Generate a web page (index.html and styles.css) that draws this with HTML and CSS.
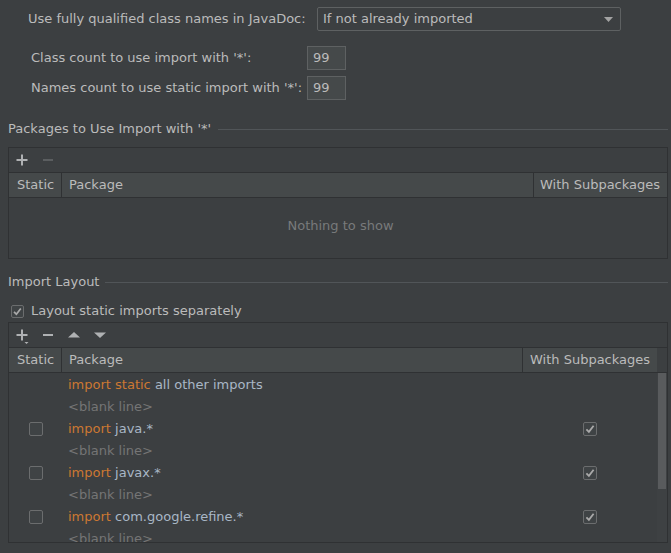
FILE: index.html
```html
<!DOCTYPE html>
<html>
<head>
<meta charset="utf-8">
<link rel="stylesheet" href="styles.css">
</head>
<body>
<div class="page">
  <div class="qrow">
    <span class="qlabel">Use fully qualified class names in JavaDoc:</span>
    <div class="combo">
      <span>If not already imported</span>
      <svg class="combo-arrow" width="9" height="5" viewBox="0 0 9 5"><path d="M0 0H9L4.5 5Z" fill="#a3a3a3"/></svg>
    </div>
  </div>

  <div class="counts">
    <span class="clabel">Class count to use import with '*':</span>
    <div class="num">99</div>
    <span class="clabel">Names count to use static import with '*':</span>
    <div class="num">99</div>
  </div>

  <div class="title title-pkg"><span>Packages to Use Import with '*'</span><i class="rule"></i></div>

  <div class="table table-pkg">
    <div class="toolbar">
      <svg class="icon" width="16" height="16" viewBox="0 0 16 16"><path d="M8 2.5V13.5M2.5 8H13.5" stroke="#afb1b3" stroke-width="2"/></svg>
      <svg class="icon" width="16" height="16" viewBox="0 0 16 16"><path d="M3 8H13" stroke="#5b5e60" stroke-width="2"/></svg>
    </div>
    <div class="thead thead-pkg">
      <div class="th th-static">Static</div>
      <div class="th th-pkg">Package</div>
      <div class="th th-sub">With Subpackages</div>
    </div>
    <div class="empty">Nothing to show</div>
  </div>

  <div class="title title-layout"><span>Import Layout</span><i class="rule"></i></div>

  <div class="checkrow">
    <span class="cb cb-small"><svg width="13" height="13" viewBox="0 0 13 13"><path d="M3 6.8L5.4 9.2L9.8 3.4" stroke="#a9a9a9" stroke-width="1.7" fill="none"/></svg></span>
    <span>Layout static imports separately</span>
  </div>

  <div class="table table-layout">
    <div class="toolbar">
      <svg class="icon" width="16" height="16" viewBox="0 0 16 16" overflow="visible"><path d="M8 2.5V13.5M2.5 8H13.5" stroke="#afb1b3" stroke-width="2"/><path d="M10.5 15H14.5L12.5 17Z" fill="#afb1b3"/></svg>
      <svg class="icon" width="16" height="16" viewBox="0 0 16 16"><path d="M3 8H13" stroke="#afb1b3" stroke-width="2"/></svg>
      <svg class="icon" width="16" height="16" viewBox="0 0 16 16"><path d="M2 10.5H14L8 5Z" fill="#afb1b3"/></svg>
      <svg class="icon" width="16" height="16" viewBox="0 0 16 16"><path d="M2 5.5H14L8 11Z" fill="#afb1b3"/></svg>
    </div>
    <div class="thead thead-layout">
      <div class="th th-static">Static</div>
      <div class="th th-pkg">Package</div>
      <div class="th th-sub">With Subpackages</div>
      <div class="th-gap"></div>
    </div>
    <div class="tbody">
      <div class="rows">
        <div class="row"><div class="cell-static"></div><div class="cell-pkg"><span class="kw">import static</span> <span class="code">all other imports</span></div><div class="cell-sub"></div></div>
        <div class="row"><div class="cell-static"></div><div class="cell-pkg blank">&lt;blank line&gt;</div><div class="cell-sub"></div></div>
        <div class="row"><div class="cell-static"><span class="cb"></span></div><div class="cell-pkg"><span class="kw">import</span> <span class="code">java.*</span></div><div class="cell-sub"><span class="cb"><svg width="14" height="14" viewBox="0 0 14 14"><path d="M3.4 7.3L5.9 9.8L10.6 3.7" stroke="#a9a9a9" stroke-width="1.8" fill="none"/></svg></span></div></div>
        <div class="row"><div class="cell-static"></div><div class="cell-pkg blank">&lt;blank line&gt;</div><div class="cell-sub"></div></div>
        <div class="row"><div class="cell-static"><span class="cb"></span></div><div class="cell-pkg"><span class="kw">import</span> <span class="code">javax.*</span></div><div class="cell-sub"><span class="cb"><svg width="14" height="14" viewBox="0 0 14 14"><path d="M3.4 7.3L5.9 9.8L10.6 3.7" stroke="#a9a9a9" stroke-width="1.8" fill="none"/></svg></span></div></div>
        <div class="row"><div class="cell-static"></div><div class="cell-pkg blank">&lt;blank line&gt;</div><div class="cell-sub"></div></div>
        <div class="row"><div class="cell-static"><span class="cb"></span></div><div class="cell-pkg"><span class="kw">import</span> <span class="code">com.google.refine.*</span></div><div class="cell-sub"><span class="cb"><svg width="14" height="14" viewBox="0 0 14 14"><path d="M3.4 7.3L5.9 9.8L10.6 3.7" stroke="#a9a9a9" stroke-width="1.8" fill="none"/></svg></span></div></div>
        <div class="row"><div class="cell-static"></div><div class="cell-pkg blank">&lt;blank line&gt;</div><div class="cell-sub"></div></div>
      </div>
      <div class="scrollbar"><div class="thumb"></div></div>
    </div>
  </div>
</div>
</body>
</html>
```

FILE: styles.css
```css
html, body {
  margin: 0;
  padding: 0;
}
body {
  width: 671px;
  height: 553px;
  overflow: hidden;
  background: #3c3f41;
  color: #bbbbbb;
  font-family: "DejaVu Sans", sans-serif;
  font-size: 13px;
  line-height: 16px;
}
.page {
  padding: 7px 3px 0 8px;
  display: flex;
  flex-direction: column;
}

/* first row */
.qrow {
  display: flex;
  align-items: center;
  height: 24px;
  padding-left: 20px;
}
.qlabel {
  width: 289px;
  flex: none;
  white-space: nowrap;
}
.combo {
  box-sizing: border-box;
  width: 304px;
  height: 24px;
  border: 1px solid #5e6162;
  border-radius: 2px;
  display: flex;
  align-items: center;
  justify-content: space-between;
  padding: 0 7px 0 5px;
}
.combo-arrow {
  display: block;
  margin-top: 1px;
}

/* counts */
.counts {
  margin-top: 15px;
  padding-left: 23px;
  display: grid;
  grid-template-columns: 276px 39px;
  row-gap: 6px;
  align-items: center;
}
.clabel {
  white-space: nowrap;
}
.num {
  box-sizing: border-box;
  height: 24px;
  width: 39px;
  background: #45494a;
  border: 1px solid #5e6162;
  padding: 3px 0 0 5px;
}

/* section titles */
.title {
  display: flex;
  align-items: center;
  height: 16px;
  white-space: nowrap;
}
.title .rule {
  flex: 1;
  height: 1px;
  background: #515558;
  margin-top: 1px;
}
.title-pkg {
  margin-top: 21px;
}
.title-pkg .rule {
  margin-left: 7px;
}
.title-layout {
  margin-top: 15px;
}
.title-layout .rule {
  margin-left: 6px;
}

/* tables */
.table {
  border: 1px solid #2f3133;
  display: flex;
  flex-direction: column;
}
.table-pkg {
  margin-top: 10px;
  height: 112px;
  box-sizing: border-box;
}
.table-layout {
  margin-top: 3px;
  height: 221px;
  box-sizing: border-box;
}
.toolbar {
  height: 24px;
  display: flex;
  align-items: center;
  gap: 10px;
  padding-left: 5px;
  border-bottom: 1px solid #2f3133;
  flex: none;
}
.icon {
  display: block;
}
.thead {
  display: grid;
  height: 24px;
  border-bottom: 1px solid #2f3133;
  flex: none;
}
.thead-pkg {
  grid-template-columns: 52px 472px 134px;
}
.thead-layout {
  grid-template-columns: 52px 461px 135px 10px;
}
.th {
  background: #45494a;
  display: flex;
  align-items: center;
  white-space: nowrap;
  overflow: hidden;
}
.th-static {
  padding-left: 8px;
}
.th-pkg {
  border-left: 1px solid #2f3133;
  padding-left: 7px;
}
.th-sub {
  border-left: 1px solid #2f3133;
  padding-left: 6px;
}
.thead-layout .th-sub {
  padding-left: 7px;
}
.th-gap {
  background: #3c3f41;
}
.empty {
  flex: 1;
  display: flex;
  align-items: center;
  justify-content: center;
  padding: 0 0 5px 5px;
  color: #787a7b;
}

.checkrow {
  margin-top: 13px;
  display: flex;
  align-items: center;
  gap: 7px;
  padding-left: 3px;
  height: 16px;
}

.cb {
  box-sizing: border-box;
  width: 14px;
  height: 14px;
  border: 1px solid #6b6d6e;
  border-radius: 2px;
  background: #3f4345;
  display: block;
  position: relative;
}
.cb svg {
  position: absolute;
  left: -1px;
  top: -1px;
}
.cb-small {
  width: 13px;
  height: 13px;
}

.tbody {
  flex: 1;
  display: flex;
  overflow: hidden;
}
.rows {
  width: 648px;
  flex: none;
  overflow: hidden;
}
.row {
  display: grid;
  grid-template-columns: 52px 461px 135px;
  height: 22px;
  align-items: center;
  padding-top: 1px;
  box-sizing: border-box;
}
.cell-static, .cell-sub {
  display: flex;
  justify-content: center;
  align-items: center;
}
.cell-static {
  padding-left: 1px;
}
.cell-pkg {
  padding-left: 7px;
  white-space: nowrap;
}
.kw {
  color: #cc7832;
}
.code {
  color: #a9b7c6;
}
.blank {
  color: #757575;
}
.scrollbar {
  width: 10px;
  flex: none;
  background: #3e4143;
}
.thumb {
  margin-left: 1px;
  width: 8px;
  height: 116px;
  background: #595b5d;
}
```
